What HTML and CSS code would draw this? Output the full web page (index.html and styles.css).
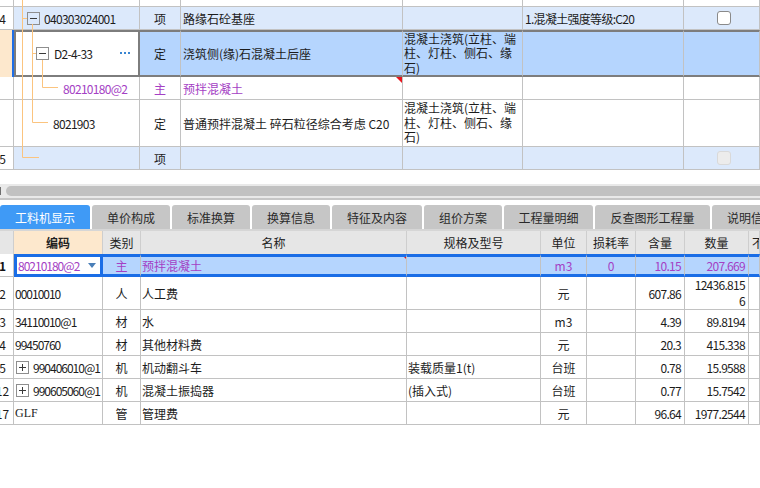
FILE: index.html
```html
<!DOCTYPE html>
<html lang="zh-CN">
<head>
    <meta charset="UTF-8">
    <meta name="viewport" content="width=device-width, initial-scale=1.0">
    <title>工料机显示</title>
    <link rel="stylesheet" href="styles.css">
</head>
<body>
    <div class="quota">
        <div class="quota-row short">
            <div class="cell num"></div>
            <div class="cell"></div>
            <div class="cell"></div>
            <div class="cell"></div>
            <div class="cell"></div>
            <div class="cell"></div>
            <div class="cell"></div>
        </div>
        <div class="quota-row item">
            <div class="cell num"><span>4</span></div>
            <div class="cell code lvl1"><span class="fold"></span>040303024001</div>
            <div class="cell center">项</div>
            <div class="cell name">路缘石砼基座</div>
            <div class="cell spec"></div>
            <div class="cell feature">1.混凝土强度等级:C20</div>
            <div class="cell check"><span class="checkbox"></span></div>
        </div>
        <div class="quota-row tall current">
            <div class="cell num"></div>
            <div class="cell code lvl2"><span class="fold"></span>D2-4-33
                <svg class="more" width="12" height="3" viewBox="0 0 12 3"><rect x="0" y="0" width="2" height="2"/><rect x="4" y="0" width="2" height="2"/><rect x="8" y="0" width="2" height="2"/></svg>
            </div>
            <div class="cell center">定</div>
            <div class="cell name">浇筑侧(缘)石混凝土后座</div>
            <div class="cell spec wrap">混凝土浇筑(立柱、端柱、灯柱、侧石、缘石)</div>
            <div class="cell feature"></div>
            <div class="cell check"></div>
        </div>
        <div class="quota-row main">
            <div class="cell num"></div>
            <div class="cell code lvl3">80210180@2</div>
            <div class="cell center">主</div>
            <div class="cell name flag">预拌混凝土</div>
            <div class="cell spec"></div>
            <div class="cell feature"></div>
            <div class="cell check"></div>
        </div>
        <div class="quota-row tall">
            <div class="cell num"></div>
            <div class="cell code lvl4">8021903</div>
            <div class="cell center">定</div>
            <div class="cell name">普通预拌混凝土 碎石粒径综合考虑 C20</div>
            <div class="cell spec wrap">混凝土浇筑(立柱、端柱、灯柱、侧石、缘石)</div>
            <div class="cell feature"></div>
            <div class="cell check"></div>
        </div>
        <div class="quota-row item">
            <div class="cell num"><span>5</span></div>
            <div class="cell code"></div>
            <div class="cell center">项</div>
            <div class="cell name"></div>
            <div class="cell spec"></div>
            <div class="cell feature"></div>
            <div class="cell check"><span class="checkbox disabled"></span></div>
        </div>

        <!-- tree connectors -->
        <svg class="tree" width="70" height="170" viewBox="0 0 70 170">
            <path d="M22.5 0V157.5H39M22 18.5H27M32.5 24V122.5H48M32 53.5H36M42.5 60V87.5H58"/>
        </svg>
    </div>

    <div class="hscroll"><span class="tick"></span><span class="thumb"></span></div>

    <div class="tabs">
        <div class="tab active" style="width: 90px">工料机显示</div>
        <div class="tab" style="width: 78px">单价构成</div>
        <div class="tab" style="width: 78px">标准换算</div>
        <div class="tab" style="width: 78px">换算信息</div>
        <div class="tab" style="width: 90px">特征及内容</div>
        <div class="tab" style="width: 78px">组价方案</div>
        <div class="tab" style="width: 89px">工程量明细</div>
        <div class="tab" style="width: 115px">反查图形工程量</div>
        <div class="tab last" style="width: 66px">说明信息</div>
    </div>

    <div class="grid">
        <div class="grid-row head">
            <div class="cell num"></div>
            <div class="cell key">编码</div>
            <div class="cell">类别</div>
            <div class="cell">名称</div>
            <div class="cell">规格及型号</div>
            <div class="cell">单位</div>
            <div class="cell">损耗率</div>
            <div class="cell">含量</div>
            <div class="cell">数量</div>
            <div class="cell more-col">不含税</div>
        </div>
        <div class="grid-row current">
            <div class="cell num bold"><span>1</span></div>
            <div class="cell code edit">80210180@2<span class="arrow"></span></div>
            <div class="cell center">主</div>
            <div class="cell name flag">预拌混凝土</div>
            <div class="cell spec"></div>
            <div class="cell center">m3</div>
            <div class="cell center">0</div>
            <div class="cell right">10.15</div>
            <div class="cell right">207.669</div>
            <div class="cell"></div>
        </div>
        <div class="grid-row tall">
            <div class="cell num"><span>2</span></div>
            <div class="cell code">00010010</div>
            <div class="cell center">人</div>
            <div class="cell name">人工费</div>
            <div class="cell spec"></div>
            <div class="cell center">元</div>
            <div class="cell"></div>
            <div class="cell right">607.86</div>
            <div class="cell right two-line">12436.815<br>6</div>
            <div class="cell"></div>
        </div>
        <div class="grid-row">
            <div class="cell num"><span>3</span></div>
            <div class="cell code">34110010@1</div>
            <div class="cell center">材</div>
            <div class="cell name">水</div>
            <div class="cell spec"></div>
            <div class="cell center">m3</div>
            <div class="cell"></div>
            <div class="cell right">4.39</div>
            <div class="cell right">89.8194</div>
            <div class="cell"></div>
        </div>
        <div class="grid-row">
            <div class="cell num"><span>4</span></div>
            <div class="cell code">99450760</div>
            <div class="cell center">材</div>
            <div class="cell name">其他材料费</div>
            <div class="cell spec"></div>
            <div class="cell center">元</div>
            <div class="cell"></div>
            <div class="cell right">20.3</div>
            <div class="cell right">415.338</div>
            <div class="cell"></div>
        </div>
        <div class="grid-row">
            <div class="cell num"><span>5</span></div>
            <div class="cell code"><span class="fold plus"></span>990406010@1</div>
            <div class="cell center">机</div>
            <div class="cell name">机动翻斗车</div>
            <div class="cell spec">装载质量1(t)</div>
            <div class="cell center">台班</div>
            <div class="cell"></div>
            <div class="cell right">0.78</div>
            <div class="cell right">15.9588</div>
            <div class="cell"></div>
        </div>
        <div class="grid-row">
            <div class="cell num"><span>12</span></div>
            <div class="cell code"><span class="fold plus"></span>990605060@1</div>
            <div class="cell center">机</div>
            <div class="cell name">混凝土振捣器</div>
            <div class="cell spec">(插入式)</div>
            <div class="cell center">台班</div>
            <div class="cell"></div>
            <div class="cell right">0.77</div>
            <div class="cell right">15.7542</div>
            <div class="cell"></div>
        </div>
        <div class="grid-row">
            <div class="cell num"><span>17</span></div>
            <div class="cell code serif">GLF</div>
            <div class="cell center">管</div>
            <div class="cell name">管理费</div>
            <div class="cell spec"></div>
            <div class="cell center">元</div>
            <div class="cell"></div>
            <div class="cell right">96.64</div>
            <div class="cell right">1977.2544</div>
            <div class="cell"></div>
        </div>
    </div>
</body>
</html>
```

FILE: styles.css
```css
body {
    margin: 0;
    width: 760px;
    height: 488px;
    overflow: hidden;
    background-color: #fff;
    font-family: "Noto Sans CJK SC", sans-serif;
    font-size: 12px;
    color: #1c1c1c;
}

/* shared cell */
.cell {
    display: flex;
    align-items: center;
    box-sizing: border-box;
    min-width: 0;
    border-right: 1px solid #c2c2c2;
    border-bottom: 1px solid #c2c2c2;
    overflow: hidden;
    white-space: nowrap;
    line-height: 15px;
}

.center {
    justify-content: center;
}

.code,
.right,
.feature {
    letter-spacing: -0.7px;
}

.right {
    justify-content: flex-end;
    text-align: right;
    padding-right: 3px;
}

.two-line {
    line-height: 16px;
}

.wrap {
    white-space: normal;
    line-height: 14.5px;
}

.num span {
    display: block;
    flex-shrink: 0;
    width: 21px;
    margin-left: -8px;
    text-align: center;
}

.bold {
    font-weight: bold;
}

.flag {
    position: relative;
}

.flag::after {
    content: "";
    position: absolute;
    top: 0;
    right: 0;
    border-top: 6px solid #e8141c;
    border-left: 6px solid transparent;
}

.fold {
    position: relative;
    flex-shrink: 0;
    width: 11px;
    height: 11px;
    border: 1px solid #8e8e8e;
}

.fold::before {
    content: "";
    position: absolute;
    left: 2px;
    right: 2px;
    top: 5px;
    height: 1px;
    background-color: #3a3a3a;
}

.fold.plus::after {
    content: "";
    position: absolute;
    top: 2px;
    bottom: 2px;
    left: 5px;
    width: 1px;
    background-color: #3a3a3a;
}

/* upper table */
.quota {
    position: relative;
}

.quota-row {
    display: grid;
    grid-template-columns: 14px 126px 41px 222px 120px 161px 1fr;
    grid-template-rows: 23px;
}

.quota-row.short {
    grid-template-rows: 7px;
}

.quota-row.tall {
    grid-template-rows: 47px;
}

.quota-row.item .cell {
    background-color: #dce9fb;
}

.quota-row.item .num {
    background-color: #fff;
}

.quota-row .name {
    padding-left: 2px;
}

.quota-row .spec {
    padding: 0 1px;
}

.quota-row .feature {
    padding-left: 2px;
}

.quota-row.current .cell {
    border-top: 2px solid #7d7d7d;
    border-bottom: 2px solid #7d7d7d;
    background-color: #b5d5fe;
}

.quota-row.current .num {
    border-top: none;
    border-bottom: none;
    border-right: 2px solid #1e6ee8;
    background-color: #fde8cd;
}

.quota-row.current .code {
    border: 2px solid #7d7d7d;
    background-color: #fff;
}

.quota-row.main .cell {
    color: #a440c4;
}

.lvl1 {
    padding-left: 13px;
}

.lvl1 .fold {
    margin-right: 4px;
}

.lvl2 {
    padding-left: 20px;
}

.lvl2 .fold {
    margin-right: 5px;
}

.more {
    margin-left: auto;
    margin-right: 6px;
    fill: #3a86d2;
}

.lvl3 {
    padding-left: 49px;
}

.lvl4 {
    padding-left: 39px;
}

.checkbox {
    width: 12px;
    height: 12px;
    margin-left: 33px;
    border: 1px solid #8a8a8a;
    border-radius: 3px;
    background-color: #fff;
}

.checkbox.disabled {
    border-color: #d9d9d9;
    background-color: #ececec;
}

.tree {
    position: absolute;
    top: 0;
    left: 0;
    pointer-events: none;
}

.tree path {
    fill: none;
    stroke: #fbc47f;
    stroke-width: 1;
}

/* horizontal scrollbar */
.hscroll {
    display: flex;
    align-items: center;
    margin-top: 14px;
    height: 14px;
    background-color: #e9e9e9;
    border-bottom: 2px solid #c6c6c6;
}

.tick {
    width: 1px;
    height: 8px;
    margin-right: 5px;
    background-color: #6f6f6f;
}

.thumb {
    flex: 1;
    height: 10px;
    border-radius: 5px 0 0 5px;
    background-color: #c1c1c1;
}

/* tabs */
.tabs {
    display: flex;
    gap: 2px;
    margin-top: 5px;
    height: 24px;
}

.tab {
    flex-shrink: 0;
    display: flex;
    align-items: center;
    justify-content: center;
    overflow: hidden;
    white-space: nowrap;
    border-radius: 3px 3px 0 0;
    background-color: #c6c6c6;
    color: #2a2a2a;
}

.tab.last {
    justify-content: flex-start;
    padding-left: 15px;
}

.tab.active {
    background-color: #3f9af6;
    color: #fff;
}

/* lower table */
.grid {
    border-top: 2px solid #d6d6d6;
}

.grid-row {
    display: grid;
    grid-template-columns: 14px 89px 38px 266px 134px 46px 49px 49px 64px 1fr;
    grid-template-rows: 23px;
}

.grid-row.tall {
    grid-template-rows: 33px;
}

.grid-row.head .cell {
    justify-content: center;
    border-bottom: none;
    border-right-color: #cecece;
    background-color: #e6e6e6;
    color: #222;
}

.grid-row.head .key {
    background-color: #fde8cd;
    font-weight: bold;
}

.grid-row.head .more-col {
    justify-content: flex-start;
    padding-left: 3px;
}

.grid-row .code {
    padding-left: 1px;
    letter-spacing: -1px;
}

.grid-row .code .fold {
    margin-left: 1px;
    margin-right: 4px;
}

.grid-row .name {
    padding-left: 1px;
}

.grid-row .spec {
    padding-left: 1px;
}

.serif {
    font-family: "Liberation Serif", "Noto Sans CJK SC", serif;
    letter-spacing: 0;
}

.grid-row .serif {
    letter-spacing: 0;
}

.grid-row.current .cell {
    border-top: 3px solid #1a6de6;
    border-bottom: 3px solid #1a6de6;
    background-color: #b5d5fe;
    color: #a440c4;
}

.grid-row.current .num {
    border-top: none;
    border-bottom: 1px solid #c2c2c2;
    background-color: #fff;
    color: #111;
}

.grid-row.current .edit {
    border-left: 3px solid #1a6de6;
    border-right: 3px solid #1a6de6;
    background-color: #fff;
}

.grid-row.current .flag::after {
    top: -2px;
    border-top-width: 4px;
    border-left-width: 4px;
}

.arrow {
    margin-left: auto;
    margin-right: 4px;
    border-left: 4px solid transparent;
    border-right: 4px solid transparent;
    border-top: 5px solid #4a7fb8;
}
```
